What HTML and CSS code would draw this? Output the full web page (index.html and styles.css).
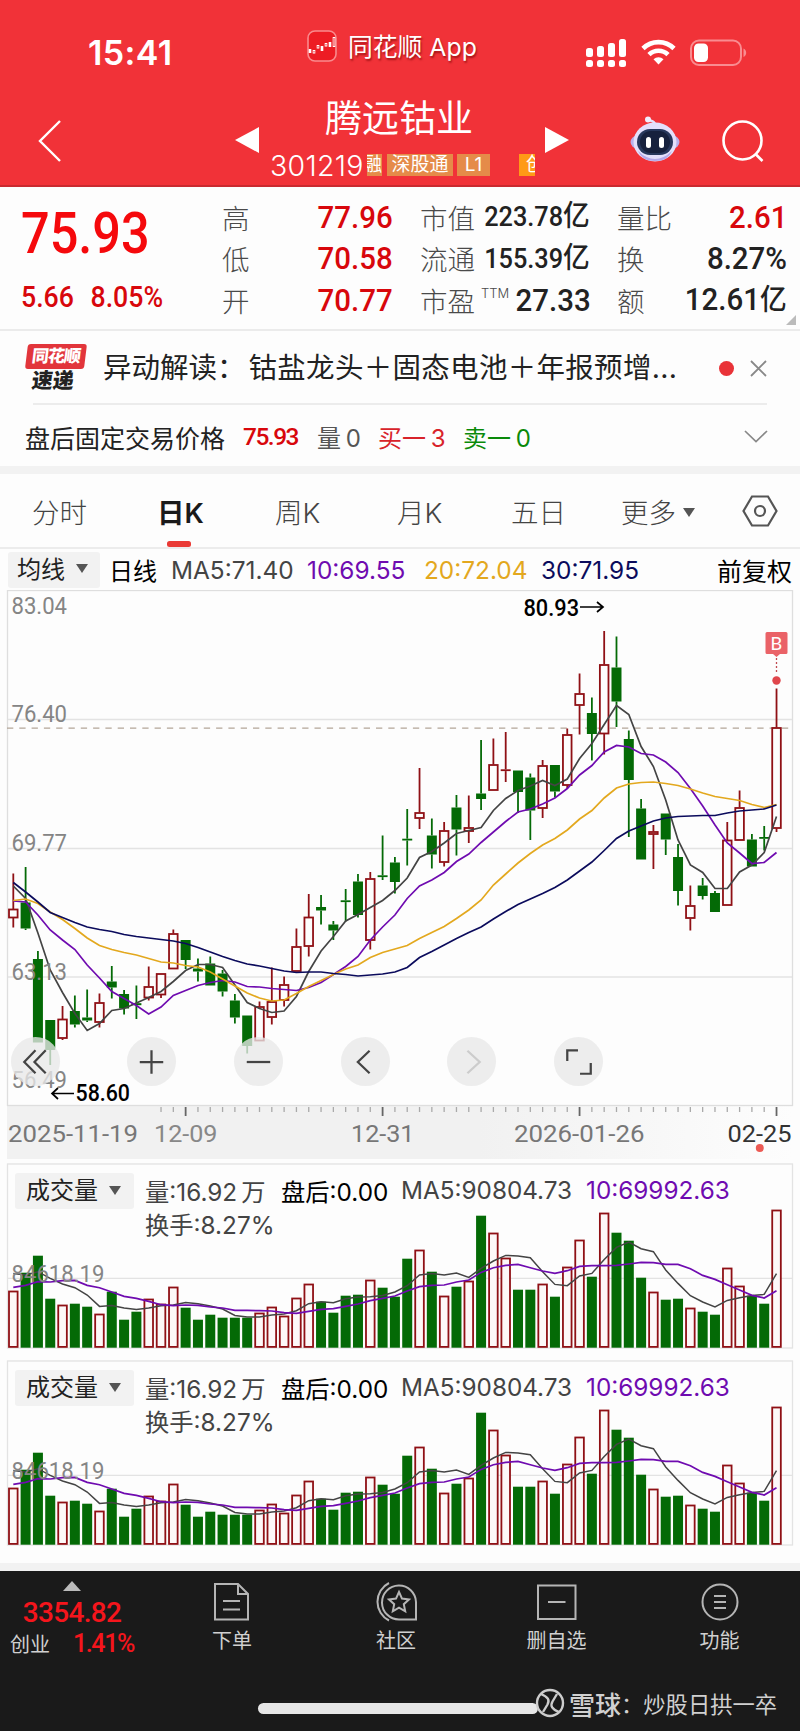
FILE: index.html
```html
<!DOCTYPE html>
<html lang="zh-CN">
<head>
  <meta charset="UTF-8">
  <meta name="viewport" content="width=device-width, initial-scale=1.0">
  <title>腾远钴业 301219</title>
  <link rel="stylesheet" href="styles.css">
</head>
<body>
  <header class="header">
    <div class="status-bar">
      <div class="time">15:41</div>
      <div class="app-name">
        <svg class="app-logo" width="30" height="32" viewBox="0 0 30 32">
          <rect x="1" y="1" width="28" height="30" rx="7" fill="#ed1c24" stroke="#f98a8d" stroke-width="1.6"/>
          <path d="M3 19v4M7 20v3.500M11 15v3.500M15 16v5M19 13v3.500M23 12v5M27 7v10" stroke="#fff" stroke-width="2.6"/>
          <path d="M7 21v1.500M11 16v1.500M19 14v1.500M27 8v8" stroke="#ed1c24" stroke-width="1"/>
        </svg>
        <span>同花顺 App</span>
      </div>
      <div class="status-icons">
        <svg width="41" height="30" viewBox="0 0 41 30" fill="#fff">
          <rect x="0" y="9" width="7" height="9" rx="2.5"/><rect x="11" y="7" width="7" height="11" rx="2.5"/>
          <rect x="22" y="4" width="7" height="14" rx="2.5"/><rect x="33" y="0" width="7" height="18" rx="2.5"/>
          <rect x="0" y="21" width="7" height="7" rx="2.5"/><rect x="11" y="21" width="7" height="7" rx="2.5"/>
          <rect x="22" y="21" width="7" height="7" rx="2.5"/><rect x="33" y="21" width="7" height="7" rx="2.5"/>
        </svg>
        <svg width="35" height="26" viewBox="0 0 35 26" fill="none" stroke="#fff" stroke-width="4.6">
          <path d="M2 9.5a22 22 0 0 1 31 0M8 15.7a13.4 13.4 0 0 1 19 0"/>
          <path d="M17.5 25.5l-5-5.3a7.3 7.3 0 0 1 10 0z" fill="#fff" stroke="none"/>
        </svg>
        <svg width="57" height="28" viewBox="0 0 57 28">
          <rect x="1" y="1.5" width="50" height="24.5" rx="8" fill="none" stroke="#f98c90" stroke-width="2"/>
          <rect x="4" y="4.5" width="14" height="18.5" rx="4.5" fill="#fff"/>
          <path d="M53.5 9.5c3.6 1.4 3.6 7.1 0 8.5z" fill="#f98c90"/>
        </svg>
      </div>
    </div>

    <div class="title-bar">
      <svg class="back" width="24" height="42" viewBox="0 0 24 42"><path d="M22 1L2 21l20 20" fill="none" stroke="#fff" stroke-width="2.4"/></svg>
      <svg class="prev" width="24" height="26" viewBox="0 0 24 26"><path d="M24 0v26L0 13z" fill="#fff"/></svg>
      <div class="stock">
        <div class="stock-name">腾远钴业</div>
        <div class="stock-code">
          <span class="code">301219</span>
          <span class="tag tag-cut">融</span>
          <span class="tag tag-sgt">深股通</span>
          <span class="tag tag-l1">L1</span>
          <span class="tag tag-cyb">创</span>
        </div>
      </div>
      <svg class="next" width="24" height="26" viewBox="0 0 24 26"><path d="M0 0v26l24-13z" fill="#fff"/></svg>
      <svg class="robot" width="50" height="46" viewBox="0 0 50 46">
        <path d="M25 9C25 5 22 5 19 4" fill="none" stroke="#e6e2fb" stroke-width="2.5"/>
        <circle cx="18" cy="3.5" r="3" fill="#f1efff"/>
        <ellipse cx="25" cy="26" rx="24.5" ry="11" fill="#b9b0ec"/>
        <ellipse cx="25" cy="26" rx="21.5" ry="19.5" fill="#e3dffb"/>
        <path d="M8 35q17 16 34 0-4 10-17 10T8 35z" fill="#b3a9ea"/>
        <rect x="7" y="13" width="36" height="26" rx="13" fill="#27375c"/>
        <rect x="10" y="15" width="30" height="22" rx="11" fill="#16203d"/>
        <rect x="16" y="21" width="5" height="11" rx="2.5" fill="#fff"/><rect x="29" y="21" width="5" height="11" rx="2.5" fill="#fff"/>
      </svg>
      <svg class="search" width="42" height="42" viewBox="0 0 42 42" fill="none" stroke="#fff" stroke-width="2.6"><circle cx="20.5" cy="20.5" r="19"/><path d="M33.5 34l7 7"/></svg>
    </div>
  </header>

  <section class="quote">
    <div class="price-box">
      <div class="price">75.93</div>
      <div class="change"><span>5.66</span><span>8.05%</span></div>
    </div>
    <dl class="fields">
      <div><dt>高</dt><dd class="red">77.96</dd></div>
      <div><dt>低</dt><dd class="red">70.58</dd></div>
      <div><dt>开</dt><dd class="red">70.77</dd></div>
    </dl>
    <dl class="fields">
      <div><dt>市值</dt><dd class="small">223.78<i>亿</i></dd></div>
      <div><dt>流通</dt><dd class="small">155.39<i>亿</i></dd></div>
      <div><dt>市盈<sup>TTM</sup></dt><dd>27.33</dd></div>
    </dl>
    <dl class="fields">
      <div><dt>量比</dt><dd class="red">2.61</dd></div>
      <div><dt>换</dt><dd>8.27%</dd></div>
      <div><dt>额</dt><dd>12.61<i>亿</i></dd></div>
    </dl>
    <span class="corner"></span>
  </section>

  <section class="news">
    <div class="news-logo"><b>同花顺</b><strong>速递</strong></div>
    <p>异动解读：<span>钴盐龙头＋固态电池＋年报预增...</span></p>
    <span class="dot"></span>
    <svg width="17" height="17" viewBox="0 0 17 17"><path d="M1 1l15 15M16 1L1 16" stroke="#888" stroke-width="1.8"/></svg>
  </section>

  <section class="after-hours">
    <span>盘后固定交易价格</span>
    <span class="ah-price">75.93</span>
    <span class="ah-vol">量 0</span>
    <span class="ah-buy">买一 3</span>
    <span class="ah-sell">卖一 0</span>
    <svg width="24" height="13" viewBox="0 0 24 13"><path d="M1 1l11 10.5L23 1" fill="none" stroke="#888" stroke-width="1.7"/></svg>
  </section>

  <nav class="tabs">
    <a>分时</a>
    <a class="active">日K</a>
    <a>周K</a>
    <a>月K</a>
    <a>五日</a>
    <a class="more">更多<i class="caret"></i></a>
    <svg width="36" height="32" viewBox="0 0 36 32" fill="none" stroke="#555" stroke-width="2.2"><path d="M10 1.5h16L34.5 16 26 30.5H10L1.5 16z"/><circle cx="18" cy="16" r="5"/></svg>
  </nav>

  <div class="ma-bar">
    <span class="select">均线<i class="caret"></i></span>
    <span class="period">日线</span>
    <span class="ma5">MA5:71.40</span>
    <span class="ma10">10:69.55</span>
    <span class="ma20">20:72.04</span>
    <span class="ma30">30:71.95</span>
    <span class="adjust">前复权</span>
  </div>

  <section class="kline">
    <svg id="kline" width="800" height="570" viewBox="0 590 800 570"></svg>
    <div class="controls">
      <button class="first"><svg viewBox="0 0 48 48"><path d="M24 13L13 24.500l11 11M34 13L23 24.500l11 11"/></svg></button>
      <button><svg viewBox="0 0 48 48"><path d="M24 13v23M12.500 24.500h23"/></svg></button>
      <button><svg viewBox="0 0 48 48"><path d="M12.500 24.500h23"/></svg></button>
      <button><svg viewBox="0 0 48 48"><path d="M28 13.500l-11.500 11 11.500 11"/></svg></button>
      <button class="disabled"><svg viewBox="0 0 48 48"><path d="M20 13.500l12 11-12 11"/></svg></button>
      <button><svg viewBox="0 0 48 48"><path d="M23.500 13H13v10.500M25.500 36H36V25.500"/></svg></button>
    </div>
  </section>

  <section class="volume">
    <svg class="vol-chart" width="800" height="197" viewBox="0 1160 800 197"></svg>
    <div class="vol-head">
      <span class="select">成交量<i class="caret"></i></span>
      <span class="vol">量:16.92<i>万</i></span>
      <span class="post">盘后:0.00</span>
      <span class="vma5">MA5:90804.73</span>
      <span class="vma10">10:69992.63</span>
      <span class="turnover">换手:8.27%</span>
    </div>
  </section>

  <section class="volume">
    <svg class="vol-chart" width="800" height="197" viewBox="0 1160 800 197"></svg>
    <div class="vol-head">
      <span class="select">成交量<i class="caret"></i></span>
      <span class="vol">量:16.92<i>万</i></span>
      <span class="post">盘后:0.00</span>
      <span class="vma5">MA5:90804.73</span>
      <span class="vma10">10:69992.63</span>
      <span class="turnover">换手:8.27%</span>
    </div>
  </section>

  <footer class="footer">
    <div class="toolbar">
      <div class="index">
        <i class="up"></i>
        <div class="index-value">3354.82</div>
        <div class="index-row"><span>创业</span><em>1.41%</em></div>
      </div>
      <a><svg width="40" height="42" viewBox="0 0 40 42"><path d="M3 3h23l10 10v25.500H3zM26 3v10h10M11 20h17M11 28.500h17"/></svg>下单</a>
      <a><svg width="44" height="42" viewBox="0 0 44 42"><path d="M42 38.500V21A17 17 0 1 0 25 38.500zM15 2a21 21 0 0 0 0 37.500"/><path d="M25 11l3 6.600 7 .8-5.200 4.800 1.400 7.100-6.200-3.600-6.200 3.600 1.400-7.100-5.200-4.800 7-.8z"/></svg>社区</a>
      <a><svg width="42" height="42" viewBox="0 0 42 42"><path d="M2 4.500h37.500v33.500H2zM12 21h17.500"/></svg>删自选</a>
      <a><svg width="40" height="42" viewBox="0 0 40 42"><circle cx="20" cy="21" r="17.500"/><path d="M14 15h12M14 21h12M14 27h12"/></svg>功能</a>
    </div>
    <div class="home-row">
      <span class="home-indicator"></span>
      <div class="watermark">
        <svg width="30" height="30" viewBox="0 0 30 30" fill="none" stroke="#ccc" stroke-width="2.4"><circle cx="15" cy="15" r="13"/><path d="M6 6c7 3 9 6 6.500 10.500L8 24M24 24c-7-3-9-6-6.500-10.500L22 6"/></svg>
        <b>雪球</b><span>：炒股日拱一卒</span>
      </div>
    </div>
  </footer>

  <script src="chart.js"></script>
</body>
</html>
```
FILE: styles.css
```css
* {
  box-sizing: border-box;
}
body {
  margin: 0;
  width: 800px;
  height: 1731px;
  background: #fdfdfd;
  color: #222;
  font-family: Inter, "Noto Sans CJK SC", sans-serif;
  font-weight: 400;
  overflow: hidden;
}
i, em {
  font-style: normal;
}
.red {
  color: #d8070c;
}

/* header */
.header {
  height: 187px;
  background: #f13238;
  border-bottom: 2px solid #c92a30;
  color: #fff;
}
.status-bar {
  height: 90px;
  display: grid;
  grid-template-columns: 219px 279px 1fr;
  padding-left: 88px;
}
.time {
  font-size: 34px;
  font-weight: 600;
  line-height: 40px;
  padding-top: 33px;
  letter-spacing: 0.4px;
}
.app-name {
  display: flex;
  align-items: flex-start;
  gap: 11px;
  padding-top: 30px;
  font-size: 24.8px;
  line-height: 34px;
  text-shadow: 1px 2px 2px rgba(110, 0, 0, .6);
}
.status-icons {
  display: flex;
  padding-top: 39px;
  gap: 14px;
}
.title-bar {
  height: 95px;
  display: grid;
  grid-template-columns: 197px 35px 275px 85px 92px 42px;
  padding-left: 38px;
  align-items: start;
}
.back {
  margin-top: 30px;
}
.prev, .next {
  margin-top: 37px;
}
.robot {
  margin-top: 26px;
}
.search {
  margin-top: 30px;
}
.stock-name {
  font-size: 37px;
  line-height: 44px;
  margin: 7px 0 0 55px;
}
.stock-code {
  display: flex;
  align-items: center;
  height: 24px;
  margin-top: 12px;
}
.code {
  width: 97px;
  font-size: 28.5px;
  font-weight: 300;
  letter-spacing: 0.3px;
}
.tag {
  height: 22px;
  line-height: 21px;
  font-size: 19px;
  background: #e58b49;
  overflow: hidden;
  text-align: center;
  white-space: nowrap;
}
.tag-cut {
  width: 15px;
  direction: rtl;
}
.tag-sgt {
  width: 66px;
  margin-left: 5px;
}
.tag-l1 {
  width: 33px;
  margin-left: 4px;
}
.tag-cyb {
  width: 16px;
  margin-left: 29px;
  background: #ff9a16;
  text-align: left;
  padding-left: 7px;
}

/* quote */
.quote {
  position: relative;
  height: 144px;
  display: grid;
  grid-template-columns: 174px 171px 170px 170px;
  column-gap: 27px;
  padding-left: 21px;
  border-bottom: 2px solid #ebebeb;
}
.price {
  font: 500 57px/60px Roboto, sans-serif;
  color: #f5090c;
  margin-top: 17px;
  transform: scaleX(.885);
  transform-origin: left;
}
.change {
  display: flex;
  gap: 18px;
  margin-top: 16px;
  font: 500 29px/34px Roboto, sans-serif;
  color: #d8070c;
  transform: scaleX(.92);
  transform-origin: left;
}
.fields {
  margin: 9px 0 0;
  white-space: nowrap;
}
.fields > div {
  height: 41.5px;
  display: flex;
  justify-content: space-between;
  align-items: center;
}
.fields dt {
  font-size: 27.5px;
  font-weight: 300;
  color: #4a4a4a;
}
.fields dd {
  margin: 0;
  font: 500 32px/40px Roboto, "Noto Sans CJK SC", sans-serif;
  transform: scaleX(.92);
  transform-origin: right;
}
.fields dd i {
  font-size: 29px;
}
.fields dd.small {
  font-size: 27.5px;
}
.fields sup {
  font-size: 13px;
  line-height: 0;
  margin-left: 6px;
  vertical-align: 14px;
}
.corner {
  position: absolute;
  right: 4px;
  bottom: 4px;
  border: 5px solid transparent;
  border-right-color: #bbb;
  border-bottom-color: #bbb;
}

/* news */
.news {
  height: 74px;
  display: flex;
  align-items: center;
  margin: 0 33px 0 25px;
  position: relative;
}
.news::after {
  content: "";
  position: absolute;
  left: 8px;
  right: 0;
  bottom: 0;
  border-bottom: 2px solid #ececec;
}
.news-logo {
  width: 78px;
  text-align: center;
  padding-right: 19px;
  line-height: 24px;
  transform: skewX(-7deg);
}
.news-logo b {
  display: block;
  height: 25px;
  background: #e2353b;
  color: #fff;
  border-radius: 3px;
  font-size: 17px;
  font-weight: 900;
  letter-spacing: -1px;
}
.news-logo strong {
  display: block;
  font-size: 21px;
  font-weight: 900;
  color: #222;
}
.news p {
  margin: 0;
  width: 616px;
  font-size: 28.5px;
  line-height: 40px;
  white-space: nowrap;
}
.news p span {
  margin-left: 3px;
  letter-spacing: 0.3px;
}
.dot {
  width: 15px;
  height: 15px;
  border-radius: 50%;
  background: #e93338;
  margin-right: 16px;
}

/* after hours */
.after-hours {
  height: 61px;
  display: grid;
  grid-template-columns: 218px 74px 61px 85px 281px 24px;
  align-items: center;
  padding: 2px 0 0 25px;
  font-size: 25px;
  white-space: nowrap;
}
.after-hours {
  box-sizing: content-box;
  height: 59px;
  border-bottom: 8px solid #f2f2f2;
}
.ah-price {
  font: 500 24.5px Roboto, sans-serif;
  letter-spacing: -1.5px;
  color: #d8070c;
}
.ah-vol {
  color: #555;
}
.ah-buy {
  color: #d8232a;
}
.ah-sell {
  color: #0a8a0a;
}
.ah-vol, .ah-buy, .ah-sell {
  font-size: 24px;
  word-spacing: -2px;
}

/* tabs */
.tabs {
  height: 75px;
  display: grid;
  grid-template-columns: 126px 117px 122px 114px 110px 121px 36px;
  align-items: center;
  padding-left: 32px;
  border-bottom: 2px solid #ececec;
  font-size: 27.5px;
  font-weight: 300;
  color: #444;
}
.tabs a {
  position: relative;
}
.tabs .active {
  font-weight: 600;
  color: #1a1a1a;
  margin-left: -1px;
}
.tabs .active::after {
  content: "";
  position: absolute;
  left: 10px;
  bottom: -16px;
  width: 24px;
  height: 6px;
  border-radius: 2.5px;
  background: #ea3a35;
}
.caret {
  display: inline-block;
  border: 6.5px solid transparent;
  border-top: 9px solid #555;
  border-bottom: 0;
  vertical-align: middle;
}
.more .caret {
  margin: -6px 0 0 7px;
}

/* MA line */
.ma-bar {
  height: 41px;
  display: grid;
  grid-template-columns: 101px 62px 136px 117px 117px 176px 80px;
  align-items: center;
  padding-left: 8px;
  font-size: 24.4px;
  white-space: nowrap;
}
.select {
  background: #f2f2f2;
  border-radius: 3px;
  height: 36px;
  line-height: 35px;
  padding-left: 9px;
  font-size: 24px;
  color: #222;
}
.ma-bar .select {
  width: 92px;
}
.select .caret {
  margin: -4px 0 0 11px;
}
.ma5, .vma5 {
  color: #444;
}
.ma10, .vma10 {
  color: #6f0bb0;
}
.ma20 {
  color: #e3a81e;
}
.ma30 {
  color: #0b0b5c;
}
.period, .adjust, .post {
  color: #000;
}
.period {
  font-size: 24px;
}
.adjust {
  font-size: 25px;
}

/* charts */
.kline {
  position: relative;
  height: 570px;
}
.kline svg, .volume svg {
  display: block;
}
svg text {
  font-family: Roboto, sans-serif;
}
.controls {
  position: absolute;
  left: 10.5px;
  top: 447px;
  display: flex;
  gap: 57.7px;
}
.controls button {
  width: 49px;
  height: 49px;
  padding: 0;
  border: 0;
  border-radius: 50%;
  background: rgba(232, 232, 232, .78);
}
.controls .first {
  margin-right: 10px;
}
.controls path {
  fill: none;
  stroke: #444;
  stroke-width: 2.2;
}
.controls .disabled path {
  stroke: #ccc;
}
.volume {
  position: relative;
  height: 197px;
}
.vol-head {
  position: absolute;
  left: 15px;
  top: 13px;
  display: grid;
  grid-template: 36px 28px / 130px 136px 120px 185px 150px;
  align-items: center;
  font-size: 24.3px;
  white-space: nowrap;
}
.vol-head .select {
  width: 119px;
  padding-left: 11px;
}
.vol, .turnover {
  color: #444;
}
.vol i {
  margin-left: 4px;
}
.vol, .post, .vma5, .vma10 {
  margin-top: -2px;
}
.turnover {
  grid-column: 2;
}

/* footer */
.footer {
  margin-top: 9px;
  border-top: 8px solid #f2f2f2;
  height: 168px;
  background: #1a1a1a;
  color: #d0d0d0;
}
.toolbar {
  display: grid;
  grid-template-columns: 144px 176px 152px 169px 157px;
  height: 100px;
  padding-top: 10px;
}
.toolbar a {
  display: flex;
  flex-direction: column;
  align-items: center;
  font-size: 20px;
  line-height: 36px;
}
.toolbar svg {
  fill: none;
  stroke: #b5b5b5;
  stroke-width: 2;
}
.index {
  position: relative;
  text-align: center;
}
.up {
  display: block;
  width: 0;
  margin: 0 auto;
  border: 9px solid transparent;
  border-top: 0;
  border-bottom: 10px solid #bbb;
}
.index-value {
  font: 500 28px/34px Roboto, sans-serif;
  color: #f5151c;
  margin-top: 5px;
  letter-spacing: -0.7px;
}
.index-row {
  display: flex;
  justify-content: space-between;
  padding: 0 10px;
  font-size: 20px;
  line-height: 30px;
}
.index-row em {
  font: 500 25px/28px Roboto, sans-serif;
  color: #f5151c;
  letter-spacing: -1.4px;
}
.home-row {
  display: flex;
  align-items: center;
  height: 52px;
  padding: 12px 0 0 258px;
}
.home-indicator {
  width: 280px;
  height: 11px;
  margin-top: 10px;
  border-radius: 6px;
  background: #e6e6e6;
}
.watermark {
  display: flex;
  align-items: center;
  margin-left: -3px;
  white-space: nowrap;
  font-size: 22.3px;
}
.watermark b {
  font-size: 26px;
  font-weight: 500;
  margin-left: 4px;
}
```
FILE: chart.js
```js
const STEP = 12.31;
const X0 = 13.3;
const RED = '#8f1015';
const GREEN = '#046a06';

// [direction, high, body top, body bottom, low]
const candles = [
  ['r',873.5,909,918,927.5],['g',867,902.5,928.5,930],['g',951,959,1042.5,1042.5],['g',1020,1020,1050,1065],
  ['r',1006,1019,1038.5,1040],['g',995.5,1011,1024.5,1027.5],['g',989.5,1017.5,1020.5,1022],['r',993.5,1002.5,1022.5,1027.5],
  ['g',966,981.5,987.5,998.5],['g',990,994,1008.5,1014.5],['g',985.5,1003.2,1005.2,1019],['r',966.5,986.5,998,1000.5],
  ['r',973.5,973.5,995,998],['r',929.5,933.5,969,969],['g',940,940,960,969],['g',958.5,968.5,971.5,981.5],
  ['g',956.5,963.5,985.5,985.5],['g',970,973.5,991.5,996.5],['g',994,1000.5,1017.5,1023.5],['g',1015.5,1015.5,1046,1053.5],
  ['r',1001.5,1006.5,1041,1041],['r',967.5,1001.5,1017.5,1024.5],['r',976.5,984.5,1000.5,1006.5],['r',928.5,946.5,971.5,971.5],
  ['r',894,917,946.5,956.5],['g',895,907,910.5,924.5],['g',921,924.5,930.5,940],['g',889,900.3,902.1,921.5],
  ['g',874,881.5,915,917.5],['r',872,878.5,940.5,949.5],['g',835.5,875.3,877.1,880],['g',857,862.5,882,893.5],
  ['g',809,838.7,840.5,865.5],['r',768,812.5,818.5,829],['g',818.5,835.5,854.5,868.5],['r',822,830.5,862.5,866.5],
  ['g',795,807.5,829.5,855.5],['r',795.5,827.5,831.5,843],['g',740,793.5,799,810],['r',738.5,764.5,790.5,790.5],
  ['r',732,769.3,771.1,782],['g',770.5,770.5,792,813],['g',773.5,777.5,810.5,840],['r',760,765.5,808.5,818],
  ['g',765,765,791.5,797.5],['r',728.5,734.5,785.5,788.5],['r',673.5,693.5,705.5,734.5],['g',697.5,713,734,760.5],
  ['r',631,664.5,734,754.5],['g',636.5,667.5,701.5,727],['g',730.5,739,780,837],['g',799,808.5,859.5,859.5],
  ['r',825,831.5,834.5,869],['g',813.5,813.5,839.5,855],['g',844,857,891,905.5],['r',885.5,905.5,918.5,930.5],
  ['g',878,885.5,896,899.5],['g',891,893,912,912],['r',822,840,905.5,905.5],['r',790.5,807.5,840.5,840.5],
  ['g',834,839.5,866.5,866.5],['g',826,837,838.8,850.5],['r',688.5,727.5,828.5,832]
];

const ma5 = [886,898.5,933,970,992.5,1013.5,1030.5,1023.5,1010.5,1008.5,1003,997.5,991.5,981.5,970.5,964.5,964.5,967.5,985,1002.5,1008.5,1012.5,1011,996.5,971.5,951,936.5,921,914.5,907.5,900.5,890.5,878,857.5,851.5,843,833.5,830.5,827.5,810.5,798.5,790.5,786,780.5,785.5,779,758.5,743.5,724.5,705.5,714.5,746.5,766.5,800,840,865,872.5,888.5,888.5,872,865,852.5,816.5];
const ma10 = [901,902,915,930,940,949.5,965,978,991.5,998.5,1005.5,1014,1007,995.5,990.5,985.5,982.5,980.5,982,986.5,987,988.5,989.5,990.5,987.5,982.5,974.5,966.5,956.5,940,927,915,898.5,886,880,872.5,861.5,854,842.5,832,821.5,812,809,804,798,788.5,775,765.5,752,745.5,747,753.5,755,762,772.5,788.5,806,825,843,853,863.5,862.5,852.5];
const ma20 = [900.5,899,903.5,912,919.5,928.5,938,945.5,949.5,952.5,955,958.5,962,963,965.5,967,972,979,986,993,998,1001,1000,993.5,986.5,980.5,974.5,969,965,957.5,952.5,949,945.5,938.5,932.5,926.5,918.5,910,900,885,874,863,853.5,845,838.5,830,819,810.5,798,788,784,782.5,782,783.5,785.5,789,793,796.5,798.5,800.5,804.5,807.5,804.5];
const ma30 = [882.5,892,902,912.5,917.5,922.5,927,929.5,931.5,934.5,936.5,938,939.5,941,943.5,947.5,952,956.5,960.5,964,966,968.5,971,972.5,972,972,973.5,974.5,976,975,974,972,967.5,957.5,951.5,945,938.5,932.5,927,919,911.5,904.5,899,893.5,887.5,880,871,862,850.5,838.5,831,826,821,818,816.5,816,815.5,815.5,813,811,810,809,805];

const volumes = [57,75,92,49,43,44,41,34,56,28,36,49,44,61,40,28,33,30,30,30,35,41,32,50,64,46,35,52,53,68,60,51,89,98,76,52,61,67,132,115,90,58,58,64,51,81,108,71,135,115,107,70,56,48,49,40,36,33,80,62,52,44,138];
// heights above the baseline, three units per pixel
const volMa5 = [223,218,228,208,191,180,158,124,127,119,115,119,126,128,136,132,125,116,97,92,92,98,101,111,132,138,135,147,152,153,157,167,186,218,223,218,224,211,238,260,277,275,270,228,190,186,215,223,265,301,317,297,288,233,193,156,137,122,142,150,157,160,222];
const volMa10 = [181,187,198,197,201,202,187,180,167,154,148,139,129,126,128,127,122,119,112,112,111,110,105,103,109,115,117,124,131,141,148,155,170,183,187,188,197,203,226,240,247,250,240,230,223,231,244,246,246,247,251,256,255,250,250,237,217,205,189,173,157,149,171];

const x = i => X0 + i * STEP;
const line = (x1, y1, x2, y2, color, extra = '') =>
  `<line x1="${x1}" y1="${y1}" x2="${x2}" y2="${y2}" stroke="${color}" ${extra}/>`;
const curve = (ys, color, width = 1.7) =>
  `<polyline points="${ys.map((y, i) => x(i).toFixed(1) + ',' + y.toFixed(1)).join(' ')}" fill="none" stroke="${color}" stroke-width="${width}"/>`;
const label = (str, tx, y, w, color, weight = 400) =>
  `<text x="${tx}" y="${y}" textLength="${w}" lengthAdjust="spacingAndGlyphs" font-size="23.5" font-weight="${weight}" fill="${color}">${str}</text>`;

function drawKline() {
  let s = '<defs><linearGradient id="axis" x1="0" y1="0" x2="1" y2="0"><stop offset=".6" stop-color="#f1f1f1"/><stop offset="1" stop-color="#fdfdfd"/></linearGradient></defs>';
  s += '<rect x="7" y="1106" width="786" height="53" fill="url(#axis)"/>';
  s += '<rect x="7.5" y="590.5" width="785" height="515" fill="none" stroke="#dedede" stroke-width="1.3"/>';
  [719.5, 848.5, 977].forEach(y => { s += line(8, y, 792, y, '#e3e3e3', 'stroke-width="1.4"'); });
  s += line(7, 728.2, 792, 728.2, '#b3a598', 'stroke-width="1.3" stroke-dasharray="6.3 6"');

  candles.forEach(([dir, high, top, bottom, low], i) => {
    const color = dir === 'r' ? RED : GREEN;
    if (high < top) s += line(x(i), high, x(i), top, color, 'stroke-width="1.8"');
    if (low > bottom) s += line(x(i), bottom, x(i), low, color, 'stroke-width="1.8"');
    if (dir === 'r' && bottom - top > 2) {
      s += `<rect x="${x(i) - 4.3}" y="${top + .5}" width="8.6" height="${bottom - top - 1}" fill="#fdfdfd" stroke="${color}" stroke-width="1.8"/>`;
    } else {
      s += `<rect x="${x(i) - 5}" y="${top}" width="10" height="${bottom - top}" fill="${color}"/>`;
    }
  });

  s += curve(ma5, '#444') + curve(ma10, '#6f0bb0') + curve(ma20, '#e3a81e') + curve(ma30, '#0b0b5c');

  [['83.04', 613.7], ['76.40', 721.7], ['69.77', 851], ['63.13', 979.7], ['56.49', 1088]].forEach(([t, y]) => {
    s += label(t, 11.5, y, 55.5, '#858585');
  });
  s += label('80.93', 523.5, 616, 55.5, '#000', 500);
  s += '<path d="M580 607h22M597 602l6 5-6 5" fill="none" stroke="#000" stroke-width="1.7"/>';
  s += label('58.60', 75.5, 1101, 54.5, '#000', 500);
  s += '<path d="M74 1093.5H52M58 1088l-6 5.5 6 5.5" fill="none" stroke="#000" stroke-width="1.7"/>';

  // buy mark
  s += '<path d="M767 632h19q1.5 0 1.5 1.5v19q0 1.5-1.5 1.5h-6l-3.5 3-3.5-3h-6q-1.5 0-1.5-1.5v-19q0-1.5 1.5-1.5z" fill="#ea6267"/>';
  s += '<text x="776.5" y="649.5" text-anchor="middle" font-size="19" fill="#fff">B</text>';
  s += line(776.5, 658, 776.5, 674, '#c04a50', 'stroke-width="1.3" stroke-dasharray="2 2"');
  s += '<circle cx="776.5" cy="680.5" r="4.2" fill="#e0464c"/>';

  for (let i = 12; i < candles.length; i++) {
    const major = (i - 14) % 16 === 0;
    s += line(x(i), 1107, x(i), major ? 1116 : 1112, major ? '#666' : '#aaa', `stroke-width="${major ? 1.8 : 1.3}"`);
  }
  s += label('2025-11-19', 8, 1142, 130, '#777');
  s += label('12-09', 154, 1142, 63.5, '#888');
  s += label('12-31', 351, 1142, 63.5, '#777');
  s += label('2026-01-26', 514, 1142, 130.5, '#777');
  s += label('02-25', 727.5, 1142, 64, '#333');
  s += '<circle cx="759.8" cy="1148" r="4" fill="#ec5a54"/>';
  document.getElementById('kline').innerHTML = s;
}

function drawVolume(svg) {
  const base = 1347.7;
  let s = '<rect x="7.5" y="1164" width="785" height="184" fill="none" stroke="#e3e3e3" stroke-width="1.3"/>';
  s += line(8, 1278.3, 792, 1278.3, '#e3e3e3', 'stroke-width="1.3"');
  volumes.forEach((h, i) => {
    if (candles[i][0] === 'r') {
      s += `<rect x="${x(i) - 4.3}" y="${base - h + .8}" width="8.6" height="${h - 1.6}" fill="#fdf8f8" stroke="${RED}" stroke-width="1.8"/>`;
    } else {
      s += `<rect x="${x(i) - 5}" y="${base - h}" width="10" height="${h}" fill="${GREEN}"/>`;
    }
  });
  s += curve(volMa5.map(v => base - v / 3), '#444', 1.5);
  s += curve(volMa10.map(v => base - v / 3), '#6f0bb0', 1.7);
  s += label('84618.19', 11.5, 1281.5, 93, '#858585');
  svg.innerHTML = s;
}

drawKline();
document.querySelectorAll('.vol-chart').forEach(drawVolume);
```
